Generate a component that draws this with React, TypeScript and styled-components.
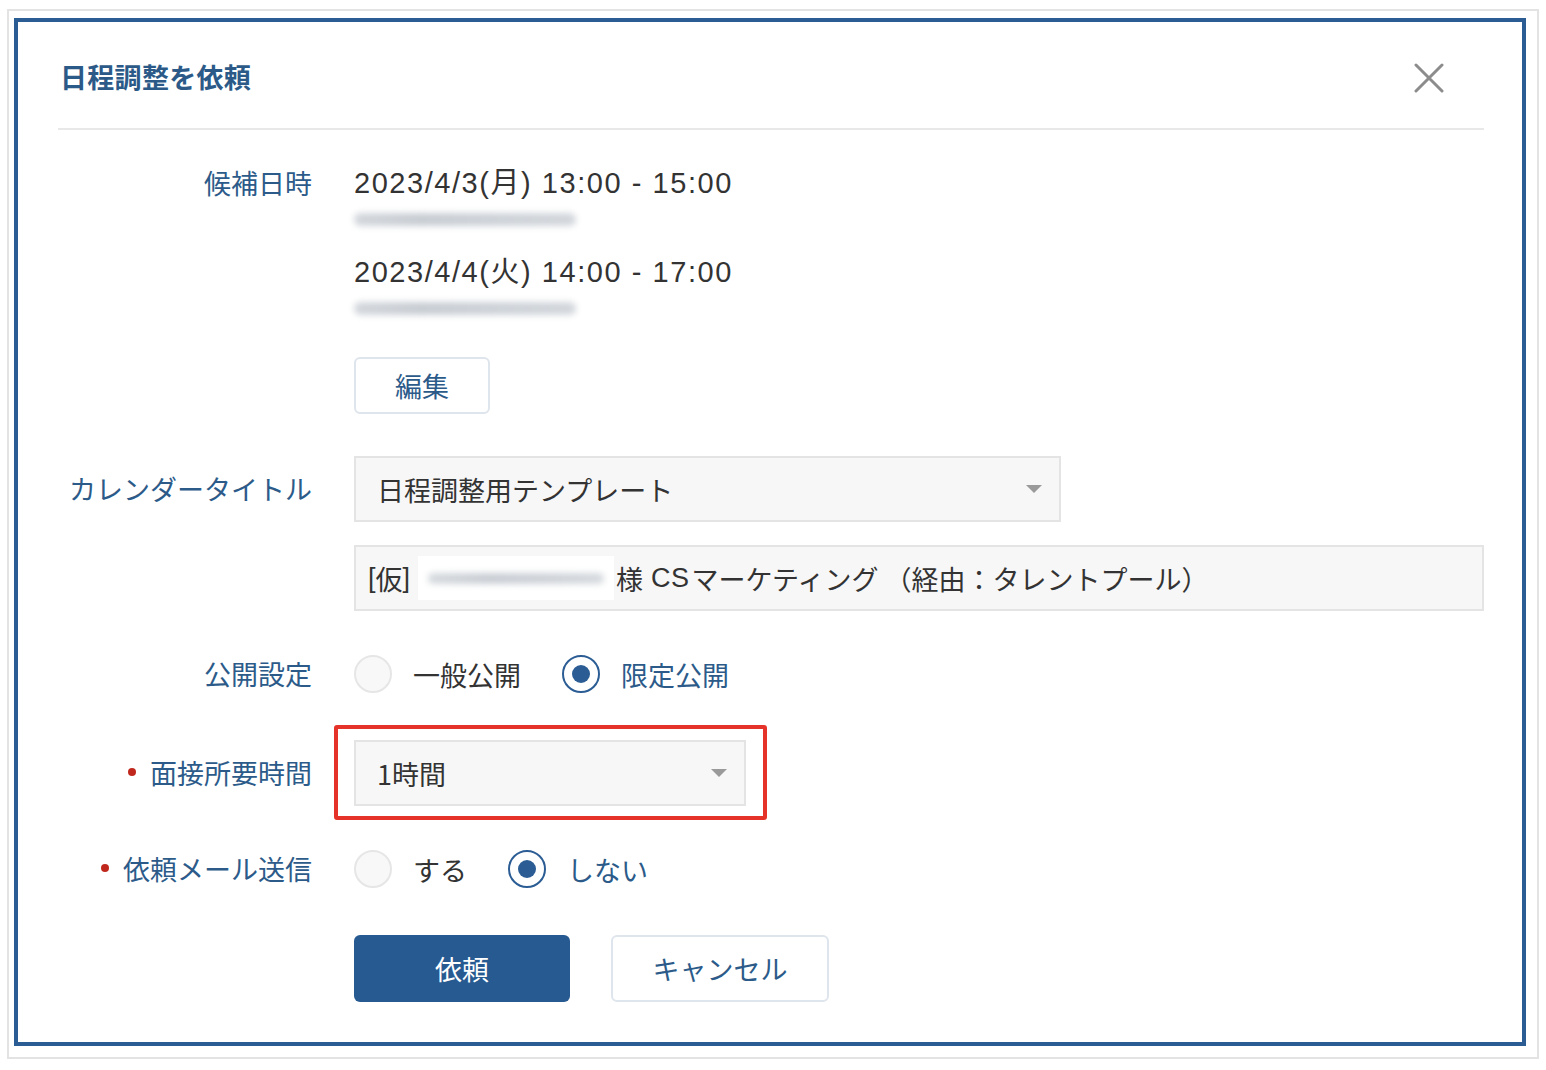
import styled, { createGlobalStyle } from "styled-components";

const GlobalStyle = createGlobalStyle`
    html, body {
        margin: 0;
        padding: 0;
        background: #fff;
    }
    body {
        font-family: "Noto Sans CJK JP", "Noto Sans", sans-serif;
    }
    * {
        box-sizing: border-box;
    }
`;

const Frame = styled.div`
    margin: 9px 0 0 7px;
    width: 1532px;
    height: 1050px;
    border: 2px solid #e3e3e3;
    padding: 7px 11px 11px 5px;
`;

const Dialog = styled.div`
    height: 100%;
    border: 4px solid #2b5d94;
    padding: 0 38px 0 40px;
    display: flex;
    flex-direction: column;
`;

const Header = styled.div`
    height: 108px;
    padding-top: 2px;
    display: flex;
    align-items: center;
    justify-content: space-between;
    border-bottom: 2px solid #e8e8e8;
`;

const Title = styled.h1`
    margin: 0 0 0 2px;
    font-size: 27px;
    font-weight: 700;
    color: #2c5a88;
    letter-spacing: 0.3px;
`;

const CloseButton = styled.button`
    width: 30px;
    height: 30px;
    margin-right: 40px;
    margin-top: 4px;
    padding: 0;
    border: none;
    background: none;
    cursor: pointer;
    display: flex;
`;

const Form = styled.div`
    display: flex;
    flex-direction: column;
`;

const Row = styled.div<{ $gap: number }>`
    display: flex;
    align-items: flex-start;
    margin-top: ${p => p.$gap}px;
`;

const Label = styled.div<{ $h: number }>`
    width: 254px;
    flex-shrink: 0;
    margin-right: 42px;
    height: ${p => p.$h}px;
    display: flex;
    align-items: center;
    justify-content: flex-end;
    font-size: 27px;
    color: #2c5b8a;
    white-space: nowrap;
    padding-bottom: 2px;
`;

const RequiredDot = styled.span`
    width: 8px;
    height: 8px;
    border-radius: 50%;
    background: #c0281e;
    margin-right: 14px;
`;

const Value = styled.div`
    display: flex;
    flex-direction: column;
    align-items: flex-start;
`;

const DateItem = styled.div`
    & + & {
        margin-top: 26px;
    }
`;

const DateText = styled.div`
    font-family: "Liberation Sans", "Noto Sans CJK JP", sans-serif;
    font-size: 29px;
    height: 40px;
    line-height: 40px;
    color: #333;
    letter-spacing: 1.55px;
`;

const BlurBar = styled.div`
    width: 222px;
    height: 13px;
    margin-top: 10px;
    border-radius: 6px;
    background: linear-gradient(90deg, #d3d7dc 0%, #c8cdd3 30%, #cdd2d8 60%, #d3d7dc 100%);
    filter: blur(3px);
`;

const OutlineButton = styled.button<{ $w: number }>`
    width: ${p => p.$w}px;
    height: 57px;
    border: 2px solid #dfe5ec;
    border-radius: 6px;
    background: #fff;
    color: #2c5b8a;
    font-family: "Noto Sans CJK JP", sans-serif;
    font-size: 27px;
    cursor: pointer;
    padding: 0;
`;

const EditButton = styled(OutlineButton)`
    margin-top: 42px;
`;

const Select = styled.div<{ $w: number }>`
    width: ${p => p.$w}px;
    height: 66px;
    background: #f7f7f7;
    border: 2px solid #e4e4e4;
    display: flex;
    align-items: center;
    justify-content: space-between;
    padding: 0 17px 0 21px;
    font-size: 27px;
    color: #333;
`;

const Caret = styled.span`
    width: 0;
    height: 0;
    border-left: 8px solid transparent;
    border-right: 8px solid transparent;
    border-top: 8px solid #9a9a9a;
`;

const TextField = styled.div`
    width: 1130px;
    height: 66px;
    margin-top: 23px;
    background: #f7f7f7;
    border: 2px solid #e4e4e4;
    display: flex;
    align-items: center;
    padding-left: 12px;
    font-size: 27px;
    color: #333;
    white-space: nowrap;
`;

const Bracket = styled.span`
    font-family: "Liberation Sans", "Noto Sans CJK JP", sans-serif;
`;

const MaskedName = styled.span`
    width: 196px;
    height: 44px;
    margin: 0 2px 0 8px;
    background: #fff;
    display: flex;
    align-items: center;
    padding: 0 10px;
`;

const MaskedLine = styled.span`
    flex: 1;
    height: 11px;
    border-radius: 5px;
    background: linear-gradient(90deg, #d6dade 0%, #c9ced4 35%, #cfd3d9 70%, #d6dade 100%);
    filter: blur(3px);
`;

const Latin = styled.span`
    font-family: "Liberation Sans", "Noto Sans CJK JP", sans-serif;
    margin: 0 2px 0 8px;
    letter-spacing: 0.5px;
`;

const RadioGroup = styled.div`
    display: flex;
    align-items: center;
    height: 38px;
`;

const RadioOption = styled.label<{ $checked: boolean }>`
    display: flex;
    align-items: center;
    margin-right: 41px;
    font-size: 27px;
    color: ${p => (p.$checked ? "#2c5b8a" : "#333")};
    cursor: pointer;
`;

const RadioCircle = styled.span<{ $checked: boolean }>`
    width: 38px;
    height: 38px;
    border-radius: 50%;
    margin-right: 21px;
    display: flex;
    align-items: center;
    justify-content: center;
    border: 2px solid ${p => (p.$checked ? "#2b5d94" : "#e6e6e6")};
    background: ${p => (p.$checked ? "#fff" : "#f8f8f8")};

    &::after {
        content: "";
        display: ${p => (p.$checked ? "block" : "none")};
        width: 18px;
        height: 18px;
        border-radius: 50%;
        background: #2b5d94;
    }
`;

const Highlight = styled.div`
    position: relative;

    &::after {
        content: "";
        position: absolute;
        top: -15px;
        right: -21px;
        bottom: -14px;
        left: -20px;
        border: 4px solid #e63329;
        border-radius: 3px;
        pointer-events: none;
    }
`;

const Actions = styled.div`
    display: flex;
    align-items: center;
    gap: 41px;
    margin-top: 47px;
    margin-left: 296px;
`;

const PrimaryButton = styled.button`
    width: 216px;
    height: 67px;
    border: none;
    border-radius: 6px;
    background: #275a91;
    color: #fff;
    font-family: "Noto Sans CJK JP", sans-serif;
    font-size: 27px;
    cursor: pointer;
`;

const CancelButton = styled(OutlineButton)`
    height: 67px;
`;

type RadioProps = { options: string[]; selected: number };

const Radios: React.FC<RadioProps> = ({ options, selected }) => (
    <RadioGroup>
        {options.map((o, i) => (
            <RadioOption key={o} $checked={i === selected}>
                <RadioCircle $checked={i === selected} />
                {o}
            </RadioOption>
        ))}
    </RadioGroup>
);

const dates = ["2023/4/3(月) 13:00 - 15:00", "2023/4/4(火) 14:00 - 17:00"];

const App = () => {
    return (
        <>
            <GlobalStyle />
            <Frame>
                <Dialog>
                    <Header>
                        <Title>日程調整を依頼</Title>
                        <CloseButton aria-label="閉じる">
                            <svg width="30" height="30" viewBox="0 0 30 30">
                                <path d="M2 2 L28 28 M28 2 L2 28" stroke="#8c8c8c" strokeWidth="3" strokeLinecap="round" />
                            </svg>
                        </CloseButton>
                    </Header>
                    <Form>
                        <Row $gap={33}>
                            <Label $h={40}>候補日時</Label>
                            <Value>
                                {dates.map(d => (
                                    <DateItem key={d}>
                                        <DateText>{d}</DateText>
                                        <BlurBar />
                                    </DateItem>
                                ))}
                                <EditButton $w={136}>編集</EditButton>
                            </Value>
                        </Row>
                        <Row $gap={42}>
                            <Label $h={66}>カレンダータイトル</Label>
                            <Value>
                                <Select $w={707}>
                                    日程調整用テンプレート
                                    <Caret />
                                </Select>
                                <TextField>
                                    <Bracket>[</Bracket>仮<Bracket>]</Bracket>
                                    <MaskedName>
                                        <MaskedLine />
                                    </MaskedName>
                                    様<Latin>CS</Latin>マーケティング （経由：タレントプール）
                                </TextField>
                            </Value>
                        </Row>
                        <Row $gap={44}>
                            <Label $h={38}>公開設定</Label>
                            <Radios options={["一般公開", "限定公開"]} selected={1} />
                        </Row>
                        <Row $gap={47}>
                            <Label $h={66}>
                                <RequiredDot />
                                面接所要時間
                            </Label>
                            <Highlight>
                                <Select $w={392}>
                                    1時間
                                    <Caret />
                                </Select>
                            </Highlight>
                        </Row>
                        <Row $gap={44}>
                            <Label $h={38}>
                                <RequiredDot />
                                依頼メール送信
                            </Label>
                            <Radios options={["する", "しない"]} selected={1} />
                        </Row>
                        <Actions>
                            <PrimaryButton>依頼</PrimaryButton>
                            <CancelButton $w={218}>キャンセル</CancelButton>
                        </Actions>
                    </Form>
                </Dialog>
            </Frame>
        </>
    );
};

export default App;
